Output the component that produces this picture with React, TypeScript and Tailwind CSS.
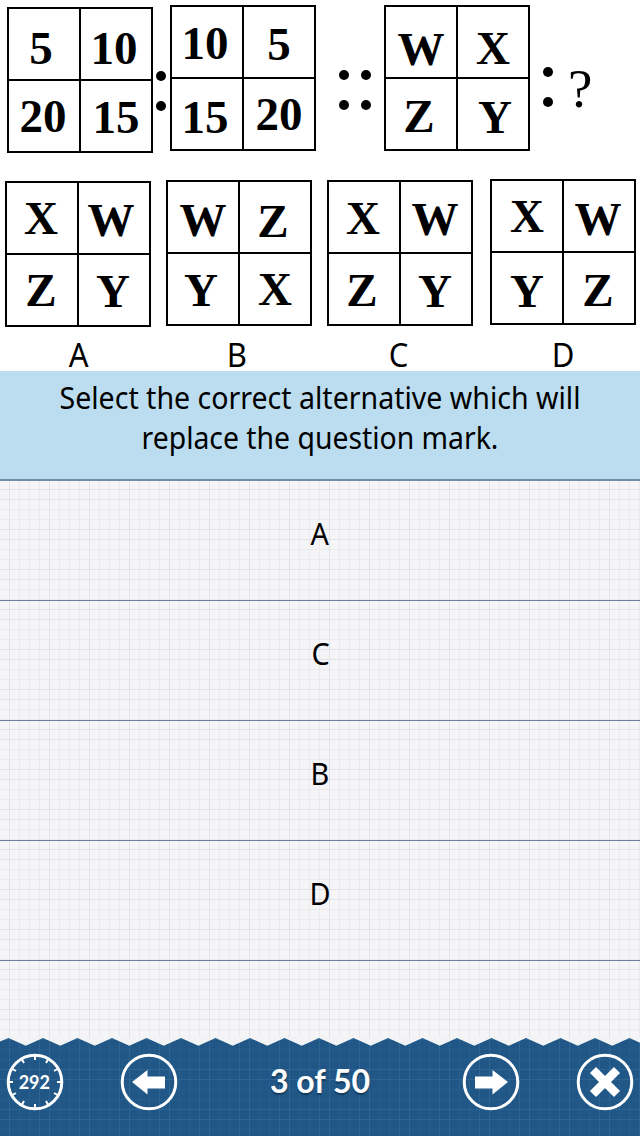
import React from "react";

type Glyph = [text: string, cx: number, cy: number];
const serif = "font-['Liberation_Serif',serif]";

// Each glyph carries the centre of its ink relative to the grid's top-left corner.
function Grid({ cells, className }: { cells: Glyph[]; className: string }) {
  return (
    <div className={`grid h-[146px] w-[146px] shrink-0 grid-cols-2 grid-rows-2 gap-[2px] border-2 border-black bg-black ${className}`}>
      {cells.map(([t, cx, cy], i) => (
        <div key={i} className="flex items-center justify-center bg-white">
          <span
            className={`${serif} text-[47px] leading-none font-bold`}
            style={{ transform: `translate(${cx - (i % 2 ? 109 : 37)}px, ${cy - (i > 1 ? 109 : 37)}px)` }}
          >
            {t}
          </span>
        </div>
      ))}
    </div>
  );
}

function Colon({ className }: { className: string }) {
  return (
    <div className={`flex shrink-0 flex-col gap-5 ${className}`}>
      <i className="size-2.5 rounded-full bg-black" />
      <i className="size-2.5 rounded-full bg-black" />
    </div>
  );
}

const options: { label: string; grid: string; text: string; cells: Glyph[] }[] = [
  { label: "A", grid: "ml-[5px] mt-[2px]", text: "ml-[69px]", cells: [["X", 36, 37], ["W", 106, 39], ["Z", 36, 109], ["Y", 108, 110]] },
  { label: "B", grid: "ml-[15px] mt-[1px]", text: "ml-[138px]", cells: [["W", 37, 40], ["Z", 107, 41], ["Y", 35, 110], ["X", 109, 109]] },
  { label: "C", grid: "ml-[15px] mt-[1px]", text: "ml-[141px]", cells: [["X", 36, 38], ["W", 108, 39], ["Z", 35, 110], ["Y", 108, 111]] },
  { label: "D", grid: "ml-[17px]", text: "ml-[145px]", cells: [["X", 37, 37], ["W", 108, 40], ["Y", 37, 112], ["Z", 108, 111]] },
];

function Ring({ children, className }: { children: React.ReactNode; className: string }) {
  return (
    <button className={`block h-[58px] w-[58px] shrink-0 text-white ${className}`}>
      <svg viewBox="0 0 58 58" className="size-full" fill="none">
        <circle cx="29" cy="29" r="26.8" stroke="white" strokeWidth="3" />
        {children}
      </svg>
    </button>
  );
}

const teeth = "M0 4.5 " + Array.from({ length: 20 }, (_, i) => {
  const peak = 8.5 + i * 34.5;
  return `L${peak} 1 L${peak + 17.3} 8.8`;
}).join(" ");

export default function App() {
  return (
    <div className="flex h-[1136px] w-[640px] flex-col overflow-hidden bg-[#f4f4f6] text-black">
      <section className="h-[371px] shrink-0 bg-white">
        <div className="flex h-[179px] items-start">
          <Grid className="mt-[7px] ml-[7px]" cells={[["5", 34, 41], ["10", 107, 41], ["20", 36, 109], ["15", 109, 110]]} />
          <Colon className="mt-[71px] ml-[3px]" />
          <Grid className="mt-[5px] ml-[4px]" cells={[["10", 35, 38], ["5", 109, 39], ["15", 35, 112], ["20", 109, 109]]} />
          <Colon className="mt-[70px] ml-[23px]" />
          <Colon className="mt-[70px] ml-[12px]" />
          <Grid className="mt-[5px] ml-[13px]" cells={[["W", 37, 44], ["X", 109, 43], ["Z", 35, 111], ["Y", 111, 112]]} />
          <Colon className="mt-[67px] ml-[13px]" />
          <span className={`${serif} mt-[58px] ml-[15px] text-[55px] leading-[61px]`}>?</span>
        </div>
        <div className="flex h-[160px] items-start">
          {options.map((o) => <Grid key={o.label} className={o.grid} cells={o.cells} />)}
        </div>
        <div className="flex font-['Noto_Sans',sans-serif] text-[33px] leading-[31px]">
          {options.map((o) => <span key={o.label} className={`flex w-5 justify-center ${o.text}`}><span className="inline-block scale-x-[.94]">{o.label}</span></span>)}
        </div>
      </section>

      <section className="h-[110px] shrink-0 border-b-2 border-[#718daa] bg-[#bbddef] pt-[7px] text-center font-['Noto_Sans',sans-serif] text-[30px] leading-10">
        <p className="origin-center scale-x-[.951] whitespace-nowrap">Select the correct alternative which will</p>
        <p className="origin-center scale-x-[.945] whitespace-nowrap">replace the question mark.</p>
      </section>

      <main className="relative min-h-0 grow bg-[#f5f5f7]">
        <svg className="absolute inset-0 size-full">
          <defs>
            <pattern id="paper" x="9" y="8" width="40" height="40" patternUnits="userSpaceOnUse">
              <path d="M10.5 0V40M20.5 0V40M30.5 0V40M0 20.5H40M0 30.5H40" stroke="#ebebee" />
              <path d="M.5 0V40M0 .5H40M0 10.5H40" stroke="#e2e3e7" />
            </pattern>
          </defs>
          <rect width="100%" height="100%" fill="url(#paper)" />
        </svg>
        {["A", "C", "B", "D"].map((l) => (
          <button key={l} className="relative block h-[120px] w-full border-b border-[#717da0] pb-[15px] text-center font-['Noto_Sans',sans-serif] text-[30px]">
            <span className="inline-block scale-x-[.96]">{l}</span>
          </button>
        ))}
      </main>

      <footer className="relative flex h-[99px] shrink-0 items-start bg-[#205786] text-white">
        <svg className="absolute inset-0 size-full">
          <defs>
            <pattern id="blueprint" x="9" y="2" width="40" height="40" patternUnits="userSpaceOnUse">
              <path d="M10.5 0V40M20.5 0V40M0 10.5H40M0 20.5H40" stroke="#265d8c" />
              <path d="M.5 0V40M30.5 0V40M0 .5H40M0 30.5H40" stroke="#2e6492" />
            </pattern>
          </defs>
          <rect width="100%" height="100%" fill="url(#blueprint)" />
        </svg>
        <svg className="absolute top-0 left-0 h-4 w-full" viewBox="0 0 640 16">
          <path d={`${teeth} V-2 H0Z`} fill="#f2f3f5" />
        </svg>
        <Ring className="relative mt-[16px] ml-[6px]">
          {Array.from({ length: 12 }, (_, i) => (
            <path key={i} d="M29 3v4" stroke="white" strokeWidth="2" transform={`rotate(${i * 30} 29 29)`} />
          ))}
          <text x="28.3" y="35.5" textAnchor="middle" fill="white" fontFamily="Lato, sans-serif" fontWeight="700" fontSize="18">292</text>
        </Ring>
        <Ring className="relative mt-[16px] ml-[56px]">
          <path d="M12 29 27.5 17V23.5H45V35.5H27.5V41.5Z" fill="white" />
        </Ring>
        <div className="relative mt-[24px] ml-[62px] w-[160px] text-center font-[Lato,sans-serif] text-[32px] leading-10 font-bold whitespace-nowrap [text-shadow:0_2px_1px_#153b5d]">3 of 50</div>
        <Ring className="relative mt-[16px] ml-[62px]">
          <path d="M46 29 30.5 17V23.5H13V35.5H30.5V41.5Z" fill="white" />
        </Ring>
        <Ring className="relative mt-[16px] ml-[56px]">
          <path d="M17 17 41 41M41 17 17 41" stroke="white" strokeWidth="8.5" />
        </Ring>
      </footer>
    </div>
  );
}
